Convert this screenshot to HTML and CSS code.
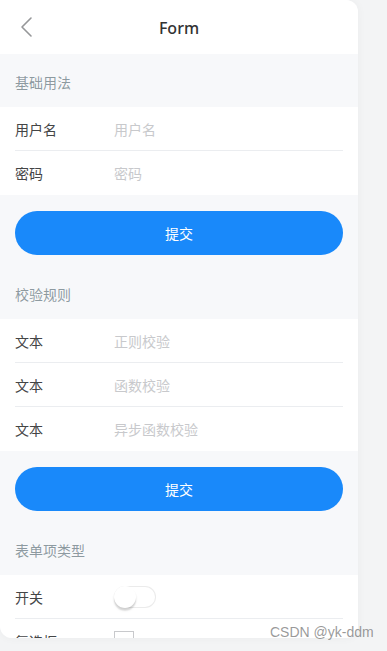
FILE: index.html
```html
<!DOCTYPE html>
<html lang="zh">
<head>
<meta charset="utf-8">
<title>Form</title>
<link rel="stylesheet" href="styles.css">
</head>
<body>
<div class="phone">
  <header class="nav">
    <svg class="nav-back" width="16" height="22" viewBox="0 0 16 22"><path d="M12 2 L3 11 L12 20" fill="none" stroke="#969799" stroke-width="1.6" stroke-linecap="round" stroke-linejoin="round"/></svg>
    <div class="nav-title">Form</div>
  </header>

  <h2 class="block-title">基础用法</h2>
  <div class="group">
    <div class="cell"><div class="cell-inner"><span class="label">用户名</span><span class="ph">用户名</span></div></div>
    <div class="cell"><div class="cell-inner last"><span class="label">密码</span><span class="ph">密码</span></div></div>
  </div>
  <div class="btn-wrap"><button class="btn">提交</button></div>

  <h2 class="block-title">校验规则</h2>
  <div class="group">
    <div class="cell"><div class="cell-inner"><span class="label">文本</span><span class="ph">正则校验</span></div></div>
    <div class="cell"><div class="cell-inner"><span class="label">文本</span><span class="ph">函数校验</span></div></div>
    <div class="cell"><div class="cell-inner last"><span class="label">文本</span><span class="ph">异步函数校验</span></div></div>
  </div>
  <div class="btn-wrap"><button class="btn">提交</button></div>

  <h2 class="block-title">表单项类型</h2>
  <div class="group">
    <div class="cell"><div class="cell-inner"><span class="label">开关</span><span class="switch"><span class="knob"></span></span></div></div>
    <div class="cell"><div class="cell-inner"><span class="label">复选框</span><span class="checkbox"></span></div></div>
  </div>
</div>
<div class="watermark">CSDN @yk-ddm</div>
</body>
</html>
```

FILE: styles.css
```css
html, body {
  margin: 0;
  padding: 0;
}
body {
  background: #f3f4f5;
  font-family: "Noto Sans", "Noto Sans CJK SC", sans-serif;
  width: 387px;
  height: 651px;
  overflow: hidden;
  position: relative;
}
.phone {
  width: 358px;
  height: 638px;
  background: #f7f8fa;
  border-radius: 0 12px 12px 12px;
  overflow: hidden;
  box-shadow: 0 0 10px rgba(0, 0, 0, 0.04);
}
.nav {
  height: 54px;
  padding-top: 2px;
  box-sizing: border-box;
  background: #fff;
  display: flex;
  align-items: center;
  justify-content: center;
  position: relative;
}
.nav-back {
  position: absolute;
  left: 19px;
  top: 16px;
}
.nav-title {
  font-size: 16px;
  font-weight: 500;
  color: #323233;
}
.block-title {
  margin: 0;
  padding: 21px 15px 16px;
  font-size: 14px;
  line-height: 16px;
  font-weight: 400;
  color: rgba(69, 90, 100, 0.6);
}
.group {
  background: #fff;
}
.cell {
  padding: 0 15px;
}
.cell-inner {
  height: 44px;
  display: flex;
  align-items: center;
  border-bottom: 1px solid #ebedf0;
  box-sizing: border-box;
  font-size: 14px;
}
.cell-inner.last {
  border-bottom: none;
}
.label {
  width: 99px;
  color: #444546;
}
.ph {
  color: #c8c9cc;
}
.btn-wrap {
  padding: 16px 15px 11px;
}
.btn {
  display: block;
  width: 100%;
  height: 44px;
  border: none;
  border-radius: 22px;
  background: #1989fa;
  color: #fff;
  font-family: "Noto Sans CJK SC", sans-serif;
  font-size: 14px;
  padding: 0;
}
.switch {
  width: 42px;
  height: 22px;
  box-sizing: border-box;
  border: 1px solid rgba(0, 0, 0, 0.08);
  border-radius: 11px;
  background: #fff;
  position: relative;
}
.knob {
  position: absolute;
  left: -1px;
  top: -1px;
  width: 22px;
  height: 22px;
  border-radius: 50%;
  background: #fff;
  box-shadow: 0 3px 1px 0 rgba(0, 0, 0, 0.05), 0 2px 2px 0 rgba(0, 0, 0, 0.1), 0 3px 3px 0 rgba(0, 0, 0, 0.05);
}
.checkbox {
  width: 20px;
  height: 20px;
  box-sizing: border-box;
  border: 1px solid #c8c9cc;
}
.watermark {
  position: absolute;
  left: 270px;
  top: 624px;
  font-family: "Liberation Sans", sans-serif;
  font-size: 14px;
  color: rgba(120, 120, 120, 0.75);
  white-space: nowrap;
}
```
